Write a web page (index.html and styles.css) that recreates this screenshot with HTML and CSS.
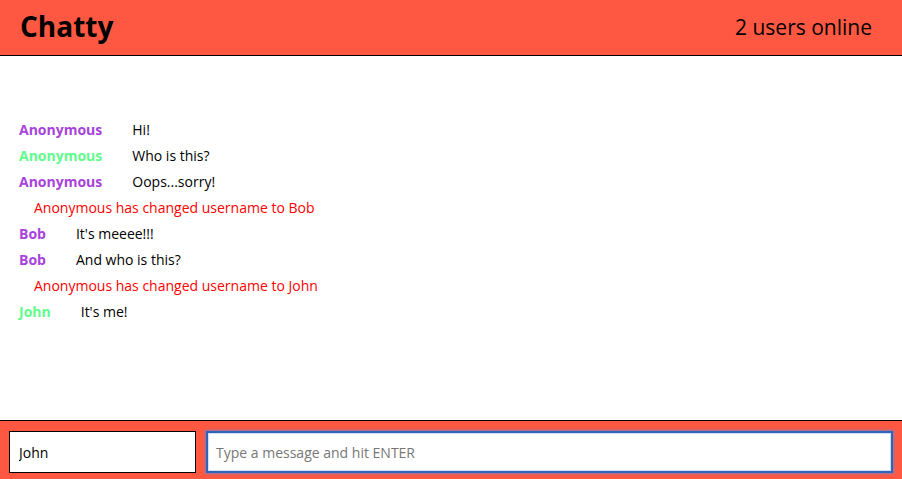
FILE: index.html
```html
<!DOCTYPE html>
<html>
<head>
<meta charset="utf-8">
<link rel="stylesheet" href="styles.css">
</head>
<body>
<div class="app">
  <nav class="navbar">
    <span class="brand">Chatty</span>
    <span class="online">2 users online</span>
  </nav>
  <main class="messages">
    <div class="message"><span class="username purple">Anonymous</span><span class="content">Hi!</span></div>
    <div class="message"><span class="username green">Anonymous</span><span class="content">Who is this?</span></div>
    <div class="message"><span class="username purple">Anonymous</span><span class="content">Oops...sorry!</span></div>
    <div class="message system">Anonymous has changed username to Bob</div>
    <div class="message"><span class="username purple">Bob</span><span class="content">It's meeee!!!</span></div>
    <div class="message"><span class="username purple">Bob</span><span class="content">And who is this?</span></div>
    <div class="message system">Anonymous has changed username to John</div>
    <div class="message"><span class="username green">John</span><span class="content">It's me!</span></div>
  </main>
  <footer class="chatbar">
    <input class="chatbar-username" value="John">
    <input class="chatbar-message focused" placeholder="Type a message and hit ENTER">
  </footer>
</div>
</body>
</html>
```
FILE: styles.css
```css
html, body {
  margin: 0;
  padding: 0;
  height: 100%;
}
body {
  font-family: "Open Sans", "DejaVu Sans", sans-serif;
  font-size: 14px;
  color: #000;
  background: #fff;
}
.app {
  display: flex;
  flex-direction: column;
  height: 100vh;
}
.navbar {
  display: flex;
  align-items: center;
  justify-content: space-between;
  height: 55px;
  padding: 0 30px 0 20px;
  background: #ff5842;
  border-bottom: 1px solid #000;
  flex-shrink: 0;
}
.brand {
  font-size: 28px;
  font-weight: 700;
  line-height: 1;
  position: relative;
  top: -2px;
}
.online {
  font-size: 21px;
  line-height: 1;
}
.messages {
  flex: 1;
  padding: 61px 19px 0;
  overflow: hidden;
}
.message {
  display: flex;
  line-height: 26px;
  height: 26px;
}
.username {
  font-weight: 700;
  margin-right: 30px;
}
.purple { color: #a843db; }
.green { color: #5ffc8c; }
.system {
  color: #ff0000;
  padding-left: 15px;
}
.chatbar {
  display: flex;
  gap: 10px;
  height: 59px;
  padding: 10px 9px 0 9px;
  box-sizing: border-box;
  background: #ff5842;
  border-top: 1px solid #000;
  flex-shrink: 0;
}
.chatbar input {
  height: 42px;
  box-sizing: border-box;
  font-family: "Open Sans", "DejaVu Sans", sans-serif;
  font-size: 14px;
  color: #000;
  background: #fff;
  outline: none;
  margin: 0;
}
.chatbar-username {
  width: 187px;
  border: 1px solid #000;
  padding: 0 9px;
}
.chatbar-message {
  flex: 1;
  border: 2px solid #2f63b8;
  padding: 0 8px;
  box-shadow: inset 0 0 0 1px #cfe0f6, 0 0 2px 1px rgba(90, 140, 225, 0.7);
}
.chatbar-message::placeholder {
  color: #777;
}
```
